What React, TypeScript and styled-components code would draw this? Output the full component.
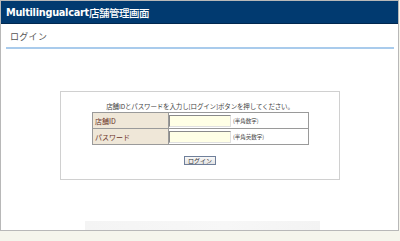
import React from "react";
import styled, { createGlobalStyle } from "styled-components";

const GlobalStyle = createGlobalStyle`
  html, body { margin: 0; padding: 0; background: #f5f5ec; }
  body { font-family: "Noto Sans CJK JP", "DejaVu Sans", sans-serif; }
  * { box-sizing: border-box; }
`;

const Frame = styled.div`
  width: 399px;
  height: 231px;
  border: 1px solid #b8b8b8;
  background: #ffffff;
  display: flex;
  flex-direction: column;
  overflow: hidden;
`;

const Header = styled.header`
  height: 23px;
  background: #013a70;
  border-bottom: 1px solid #00284f;
  padding-left: 5px;
  display: flex;
  align-items: center;
  color: #ffffff;
  font-family: "DejaVu Sans", "Noto Sans CJK JP", sans-serif;
  font-weight: bold;
  font-size: 9.8px;
  letter-spacing: -0.3px;
`;

const HeaderJa = styled.span`
  font-family: "Noto Sans CJK JP", sans-serif;
  font-weight: 500;
  font-size: 10.5px;
  letter-spacing: -0.5px;
`;

const TitleBar = styled.div`
  margin: 0 4px 0 5px;
  height: 25px;
  border-bottom: 2px solid #a9cbec;
  display: flex;
  align-items: center;
  padding-left: 4px;
  padding-top: 2px;
  color: #555555;
  font-size: 9px;
  letter-spacing: 0.3px;
`;

const LoginBox = styled.section`
  margin: 42px 0 0 59px;
  width: 280px;
  height: 89px;
  border: 1px solid #d0d0d0;
  display: flex;
  flex-direction: column;
  align-items: center;
`;

const Instruction = styled.p`
  margin: 9px 0 0;
  height: 11px;
  line-height: 11px;
  font-size: 6.5px;
  color: #444444;
  letter-spacing: -0.15px;
`;

const FormTable = styled.table`
  width: 217px;
  border-collapse: collapse;
  border: 1px solid #9a9a9a;
  margin-left: 1px;
  table-layout: fixed;
`;

const LabelCell = styled.th`
  width: 76px;
  height: 16px;
  padding: 0 0 0 2px;
  border: 1px solid #9a9a9a;
  background: #efe7d8;
  color: #6b3328;
  font-size: 7px;
  font-weight: normal;
  text-align: left;
`;

const FieldCell = styled.td`
  height: 16px;
  padding: 0;
  border: 1px solid #9a9a9a;
  font-size: 5.5px;
  color: #444444;
  white-space: nowrap;
`;

const FieldInput = styled.input`
  width: 62px;
  height: 12px;
  margin: 0 2px 0 0;
  padding: 0;
  vertical-align: middle;
  background: #ffffe6;
  border-style: solid;
  border-width: 1px;
  border-color: #8a8a8a #e0e0e0 #e0e0e0 #8a8a8a;
  outline: none;
`;

const Note = styled.span`
  vertical-align: middle;
`;

const LoginButton = styled.button`
  margin-top: 11px;
  width: 32px;
  height: 9px;
  padding: 0;
  border: 1px solid #6f7f9a;
  background: linear-gradient(#f8f8f8, #e4e4e4);
  font-family: "Noto Sans CJK JP", sans-serif;
  font-size: 6px;
  line-height: 7px;
  color: #333333;
`;

const Shadow = styled.div`
  margin: 41px 0 0 84px;
  width: 235px;
  height: 9px;
  background: linear-gradient(to right, #f4f4f4, #f7f7f7 60%, #f3f3f3);
`;

export default function App() {
  return (
    <>
      <GlobalStyle />
      <Frame>
        <Header>
          Multilingualcart<HeaderJa>店舗管理画面</HeaderJa>
        </Header>
        <TitleBar>ログイン</TitleBar>
        <LoginBox>
          <Instruction>店舗IDとパスワードを入力し[ログイン]ボタンを押してください。</Instruction>
          <FormTable>
            <tbody>
              <tr>
                <LabelCell>店舗ID</LabelCell>
                <FieldCell>
                  <FieldInput type="text" />
                  <Note>(半角数字)</Note>
                </FieldCell>
              </tr>
              <tr>
                <LabelCell>パスワード</LabelCell>
                <FieldCell>
                  <FieldInput type="password" />
                  <Note>(半角英数字)</Note>
                </FieldCell>
              </tr>
            </tbody>
          </FormTable>
          <LoginButton type="button">ログイン</LoginButton>
        </LoginBox>
        <Shadow />
      </Frame>
    </>
  );
}
